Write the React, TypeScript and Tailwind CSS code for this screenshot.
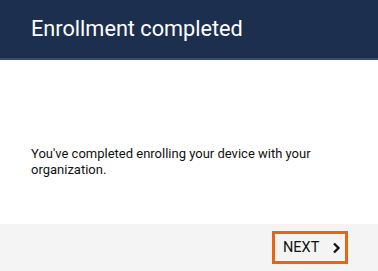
import React from 'react';

export default function App() {
  return (
    <div className="w-[378px] h-[271px] flex flex-col bg-white font-['Roboto',sans-serif]">
      <div className="h-[60px] bg-[#1c2f4f] border-b-2 border-[#3a4c6a] flex items-center pl-[31px]">
        <span className="text-white text-[21.7px] leading-none">Enrollment completed</span>
      </div>
      <div className="flex-1 pl-[31px] pr-4 pt-[86px] text-[13px] leading-[16px] text-[#111111]">
        You've completed enrolling your device with your organization.
      </div>
      <div className="h-[47px] bg-[#f4f4f4] flex items-center justify-end pr-[30px]">
        <button className="h-[33px] w-[76px] border-[3px] border-[#e8650f] flex items-center pl-[8px] text-[14.5px] text-[#111111]">
          <span>NEXT</span>
          <svg className="ml-[13px]" width="9" height="12" viewBox="0 0 9 12">
            <path d="M2 1.5 L6.5 6 L2 10.5" fill="none" stroke="#111111" strokeWidth="2.3" />
          </svg>
        </button>
      </div>
    </div>
  );
}
